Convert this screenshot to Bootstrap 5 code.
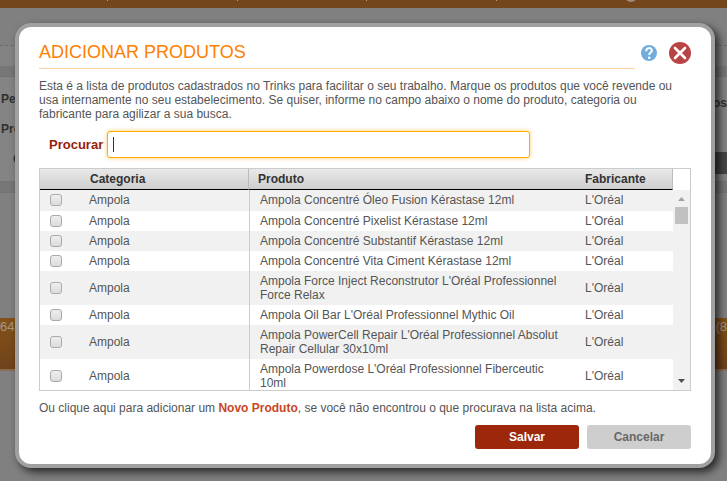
<!DOCTYPE html>
<html lang="pt-BR">
<head>
<meta charset="utf-8">
<meta name="viewport" content="width=device-width, initial-scale=1">
<title>Adicionar Produtos</title>
<link rel="stylesheet" href="https://cdn.jsdelivr.net/npm/bootstrap@5.3.0/dist/css/bootstrap.min.css">
<style>
body{font-family:"Liberation Sans",Arial,sans-serif;font-size:12px;line-height:14px;color:#555;background:#808080}
.page-back{min-height:100vh;color:#303030;font-weight:700}
.top-strip{height:8px;background:#73471b;overflow:hidden;padding:0 90px 0 107px}
.top-strip i{width:1px;height:1px;background:#b0a090}
.top-strip b{width:12px;height:12px;border-radius:50%;background:#a08c80;margin-top:-10px}
.dash-zone{height:38px;border-bottom:1px dashed #6c6c6c}
.plain-zone{height:20px;background:#838383}
.band{height:11px;background:#777;border-bottom:1px solid #737373}
.filter-zone{height:105px;background:#848484;padding:15px 0 0 1px;border-bottom:1px solid #737373}
.filter-line{height:30px}
.dark-btn{width:60px;height:22px;background:#444}
.gap-zone{height:125px}
.orange-strip{height:53px;background:linear-gradient(#845219,#70421a);border-bottom:2px solid #8b6d52;color:#a09a92;font-size:13px;font-weight:400;padding-top:2px}
.overlay-zone{padding:23px 12px 13px 15px}
.dialog-box{background:#fff;border:4px solid #a0a0a0;border-radius:16px;box-shadow:4px 4px 8px rgba(0,0,0,.7);padding:14px 20px 15px}
.dialog-title{font-size:18px;line-height:22px;color:#ff8000;border-bottom:1px solid #fbd0a0;padding-bottom:5px}
.title-icons{gap:8px;padding-left:4px}
.icon-btn{line-height:0}
.intro{margin:10px 0 0}
.search-line{margin:10px 0}
.search-label{color:#961e0c;font-size:13px;line-height:16px;padding-left:10px}
.search-box{max-width:423px;height:27px;border:1px solid #ffab00;border-radius:3px;outline:0;box-shadow:0 0 4px #ffc860;background:linear-gradient(#333,#333) 5px center/1px 15px no-repeat,#fff;padding:0 6px}
.list-frame{border:1px solid #ccc;height:223px;overflow:hidden}
.prod-table{border-collapse:separate;border-spacing:0;table-layout:fixed;width:100%}
.prod-table th{height:21px;padding:0 0 1px;color:#333;background:linear-gradient(#e9e9e9,#cecece);border-bottom:1px solid #000;vertical-align:middle}
.prod-table th:nth-child(2){border-right:1px solid #bbb;padding-left:1px}
.prod-table th:nth-child(3){padding-left:9px}
.prod-table th:last-child{border-right:1px solid #bbb}
.prod-table td{padding:3px 0;vertical-align:middle}
.prod-table td:nth-child(3){border-left:1px solid #ccc;padding-left:10px;padding-right:12px}
.prod-table tbody tr:nth-child(odd){background:#f1f1f1}
.prod-table tbody tr:first-child td{padding-bottom:4px}
.col-tick{width:49px}.col-cat{width:160px}.col-maker{width:88px}
.tick{appearance:none;display:block;width:12px;height:12px;margin:1px 0 1px 10px;border:1px solid #aaa;border-radius:3px;background:linear-gradient(#eee,#dcdcdc)}
.tick:checked{background:#888}
.scroll-side{width:17px;margin-top:21px;background:#f1f1f1;padding:6px 2px}
.scroll-thumb{width:13px;height:17px;background:#c1c1c1;margin-top:6px}
.hint{margin:10px 0}
.new-link{color:#c74624}
.act{width:104px;height:24px;border:0;border-radius:3px;font-size:12px;line-height:14px;font-weight:700;padding:0}
.act-save,.act-save:hover{background:#9c270b;color:#fff}
.act-cancel,.act-cancel:hover{background:#cecece;color:#686868}
</style>
<script src="https://cdn.jsdelivr.net/npm/bootstrap@5.3.0/dist/js/bootstrap.bundle.min.js"></script>
</head>
<body class="position-relative overflow-hidden">
<div class="page-back" aria-hidden="true">
  <div class="top-strip d-flex justify-content-between"><i></i><i></i><i></i><i></i><b></b></div>
  <div class="dash-zone"></div>
  <div class="plain-zone"></div>
  <div class="band"></div>
  <div class="filter-zone">
    <div class="filter-line d-flex justify-content-between"><span>Pe</span><span class="pt-1">os</span></div>
    <div class="filter-line">Pro</div>
    <div class="d-flex justify-content-between"><span class="ps-2 ms-1">C</span><span class="dark-btn"></span></div>
  </div>
  <div class="band"></div>
  <div class="gap-zone"></div>
  <div class="orange-strip d-flex justify-content-between"><span>64</span><span>(8</span></div>
</div>

<div class="overlay-zone position-absolute top-0 start-0 w-100">
  <div class="dialog-box" role="dialog" aria-labelledby="dlgTitle">
    <header class="d-flex align-items-start">
      <h1 id="dlgTitle" class="dialog-title flex-grow-1 fw-normal text-uppercase mb-0">Adicionar Produtos</h1>
      <div class="title-icons d-flex align-items-center">
        <button type="button" class="icon-btn btn p-0 border-0 me-1" aria-label="Ajuda">
          <svg width="18" height="24" viewBox="0 0 18 24"><circle cx="10" cy="12" r="8" fill="#72acdc"/><path d="M7.200 10.200C7.200 6.100 13 6.300 12.900 9.600c0 2-2.700 2-2.700 4.300" fill="none" stroke="#fff" stroke-width="2"/><circle cx="10.200" cy="16.700" r="1.300" fill="#fff"/></svg>
        </button>
        <button type="button" class="icon-btn btn p-0 border-0" aria-label="Fechar">
          <svg width="22" height="24" viewBox="0 0 22 24"><circle cx="11" cy="12" r="11" fill="#b94444"/><path d="M6 7l10 10M16 7L6 17" stroke="#fff" stroke-width="2.600" stroke-linecap="round"/></svg>
        </button>
      </div>
    </header>
    <p class="intro">Esta é a lista de produtos cadastrados no Trinks para facilitar o seu trabalho. Marque os produtos que você revende ou usa internamente no seu estabelecimento. Se quiser, informe no campo abaixo o nome do produto, categoria ou fabricante para agilizar a sua busca.</p>
    <div class="search-line d-flex align-items-center gap-1">
      <label for="q" class="search-label fw-bold">Procurar</label>
      <input id="q" type="text" class="search-box flex-grow-1">
    </div>
    <div class="list-frame d-flex">
      <div class="flex-grow-1">
        <table class="prod-table">
          <colgroup><col class="col-tick"><col class="col-cat"><col><col class="col-maker"></colgroup>
          <thead><tr><th></th><th>Categoria</th><th>Produto</th><th>Fabricante</th></tr></thead>
          <tbody>
            <tr><td><input class="tick" type="checkbox" aria-label="Óleo Fusion"></td><td>Ampola</td><td>Ampola Concentré Óleo Fusion Kérastase 12ml</td><td>L'Oréal</td></tr>
            <tr><td><input class="tick" type="checkbox" aria-label="Pixelist"></td><td>Ampola</td><td>Ampola Concentré Pixelist Kérastase 12ml</td><td>L'Oréal</td></tr>
            <tr><td><input class="tick" type="checkbox" aria-label="Substantif"></td><td>Ampola</td><td>Ampola Concentré Substantif Kérastase 12ml</td><td>L'Oréal</td></tr>
            <tr><td><input class="tick" type="checkbox" aria-label="Vita Ciment"></td><td>Ampola</td><td>Ampola Concentré Vita Ciment Kérastase 12ml</td><td>L'Oréal</td></tr>
            <tr><td><input class="tick" type="checkbox" aria-label="Force Inject"></td><td>Ampola</td><td>Ampola Force Inject Reconstrutor L'Oréal Professionnel Force Relax</td><td>L'Oréal</td></tr>
            <tr><td><input class="tick" type="checkbox" aria-label="Oil Bar"></td><td>Ampola</td><td>Ampola Oil Bar L'Oréal Professionnel Mythic Oil</td><td>L'Oréal</td></tr>
            <tr><td><input class="tick" type="checkbox" aria-label="PowerCell Repair"></td><td>Ampola</td><td>Ampola PowerCell Repair L'Oréal Professionnel Absolut Repair Cellular 30x10ml</td><td>L'Oréal</td></tr>
            <tr><td><input class="tick" type="checkbox" aria-label="Powerdose"></td><td>Ampola</td><td>Ampola Powerdose L'Oréal Professionnel Fiberceutic 10ml</td><td>L'Oréal</td></tr>
          </tbody>
        </table>
      </div>
      <div class="scroll-side d-flex flex-column align-items-center flex-shrink-0" aria-hidden="true">
        <svg width="7" height="5" viewBox="0 0 7 5"><path d="M0 5L3.500 1L7 5z" fill="#a3a3a3"/></svg>
        <div class="scroll-thumb"></div>
        <svg class="mt-auto" width="7" height="5" viewBox="0 0 7 5"><path d="M0 0L3.500 4L7 0z" fill="#505050"/></svg>
      </div>
    </div>
    <p class="hint">Ou clique aqui para adicionar um <a href="#" class="new-link fw-bold text-decoration-none">Novo Produto</a>, se você não encontrou o que procurava na lista acima.</p>
    <div class="d-flex justify-content-end gap-2">
      <button type="button" class="btn act act-save">Salvar</button>
      <button type="button" class="btn act act-cancel">Cancelar</button>
    </div>
  </div>
</div>
</body>
</html>
